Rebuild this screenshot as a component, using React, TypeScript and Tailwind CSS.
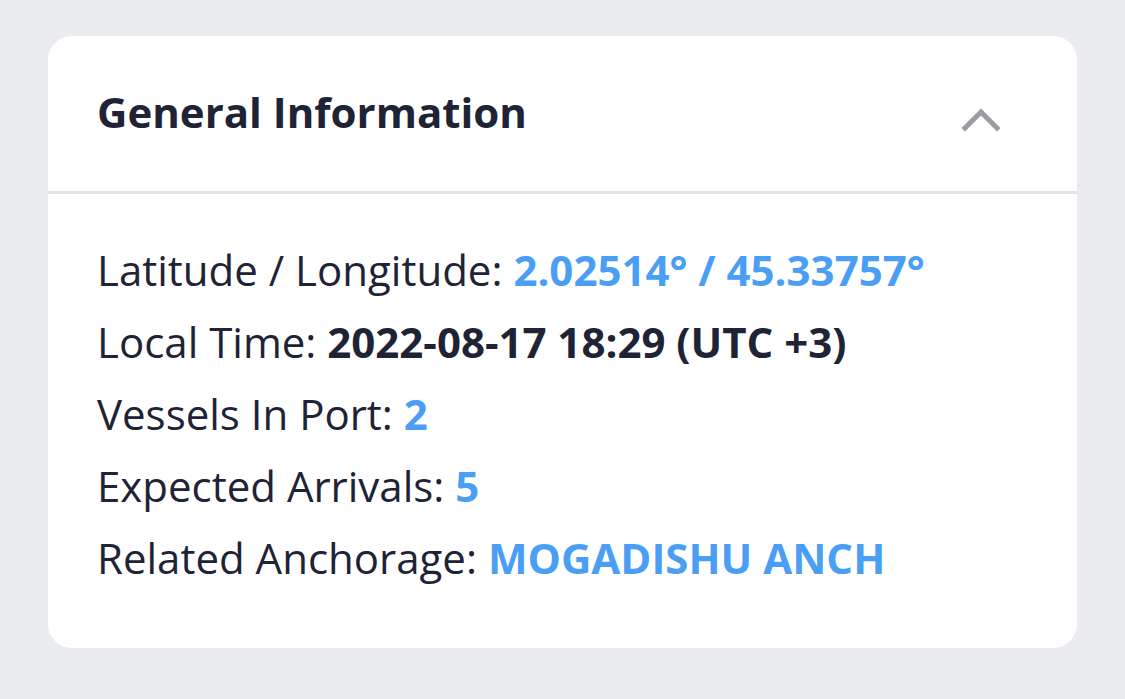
import React from "react";

export default function App() {
  return (
    <div className="min-h-[699px] w-[1125px] bg-[#ebecf0] pt-[36px] pl-[48px]" style={{ fontFamily: '"Open Sans", sans-serif' }}>
      <div className="w-[1029px] h-[612px] rounded-[24px] bg-white flex flex-col">
        <div className="h-[158px] flex items-center justify-between pl-[49px] pr-[76px] border-b-[3px] border-[#e3e4e8]">
          <h2 className="text-[42px] font-bold text-[#1e2335] leading-none -mt-[3px]">General Information</h2>
          <svg width="40" height="28" viewBox="0 0 40 28" className="mt-[12px]">
            <path d="M4 22 L20 6 L36 22" fill="none" stroke="#9a9ca5" strokeWidth="5" strokeLinecap="square" />
          </svg>
        </div>
        <div className="pl-[49px] pt-[40px] text-[42px] leading-[72px] text-[#1e2335]">
          <div>Latitude / Longitude: <span className="font-bold text-[#4a9ff5]">2.02514° / 45.33757°</span></div>
          <div>Local Time: <span className="font-bold">2022-08-17 18:29 (UTC +3)</span></div>
          <div>Vessels In Port: <span className="font-bold text-[#4a9ff5]">2</span></div>
          <div>Expected Arrivals: <span className="font-bold text-[#4a9ff5]">5</span></div>
          <div>Related Anchorage: <span className="font-bold text-[#4a9ff5]">MOGADISHU ANCH</span></div>
        </div>
      </div>
    </div>
  );
}
